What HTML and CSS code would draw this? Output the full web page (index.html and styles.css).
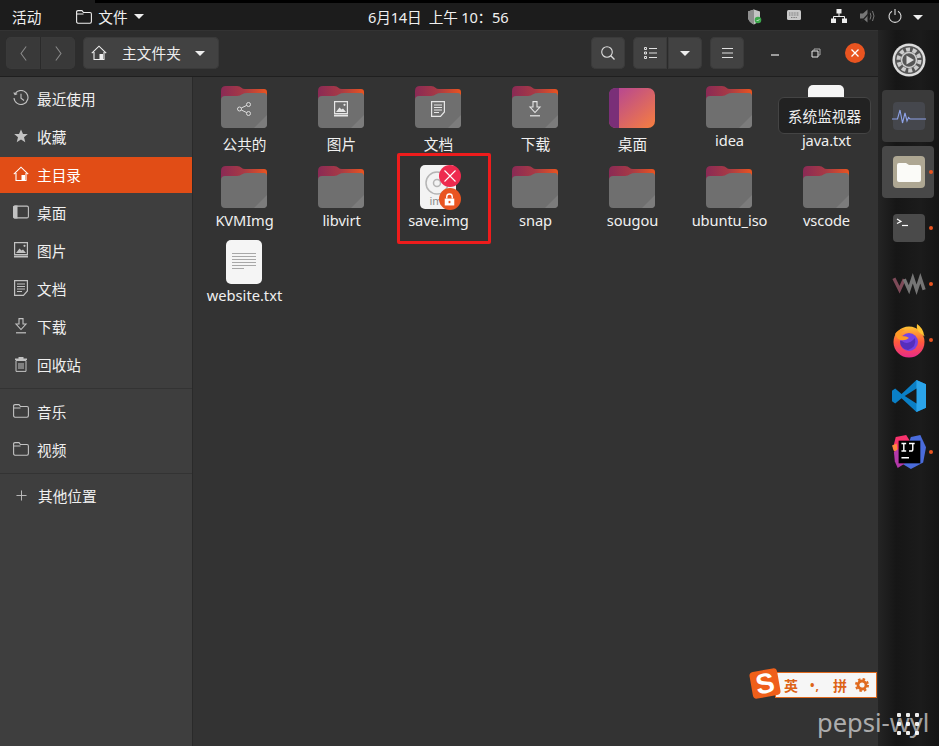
FILE: index.html
```html
<!DOCTYPE html>
<html lang="zh-CN">
<head>
<meta charset="utf-8">
<title>文件</title>
<link rel="stylesheet" href="styles.css">
</head>
<body>
<svg class="defs" width="0" height="0" aria-hidden="true">
  <defs>
    <linearGradient id="fb" x1="0" y1="0" x2="1" y2="0"><stop offset="0" stop-color="#8a2a55"/><stop offset=".5" stop-color="#a83a45"/><stop offset="1" stop-color="#e95420"/></linearGradient>
    <linearGradient id="desk" x1="0" y1="0" x2="1" y2="1"><stop offset="0" stop-color="#b0419a"/><stop offset="1" stop-color="#f77f3f"/></linearGradient>
    <symbol id="folder" viewBox="0 0 46 42">
      <path d="M0 5Q0 0 5 0H16Q19 0 20.500 1.800Q21.500 3 24 3H43Q46 3 46 6V20H0Z" fill="url(#fb)"/>
      <path d="M0 14Q0 10 4 10H16Q19 10 21 8.300Q23 7 26 7H43Q46 7 46 11V38Q46 42 42 42H4Q0 42 0 38Z" fill="#6f6f6f"/>
      <path d="M46 29L33 42H42Q46 42 46 38Z" fill="#7c7c7c"/>
    </symbol>
    <symbol id="i-home" viewBox="0 0 16 16">
      <path d="M.8 8.200L8 1.200l7.200 7M3 7v7.500h10V7" fill="none" stroke="currentColor" stroke-width="1.100"/><rect x="8.500" y="9" width="3.500" height="5.500" fill="currentColor"/>
    </symbol>
    <symbol id="i-folder" viewBox="0 0 16 14">
      <path d="M2 .6H6L7.500 2.500H14Q15.400 2.500 15.400 4V11.500Q15.400 13.200 14 13.200H2Q.6 13.200.6 11.500V2Q.6.6 2 .6ZM.6 4H7.500" fill="none" stroke="currentColor" stroke-width="1.100"/>
    </symbol>
    <symbol id="i-doc" viewBox="0 0 14 16">
      <path d="M.6.6H13.400V11L9.500 15.400H.6Z" fill="none" stroke="currentColor" stroke-width="1.200"/><path d="M3 4H11M3 6.500H11M3 9H11M3 11.500H8" stroke="currentColor"/>
    </symbol>
    <symbol id="i-pic" viewBox="0 0 14 16">
      <path d="M.6.600H13.400V12.500H.6Z" fill="none" stroke="currentColor" stroke-width="1.200"/><path d="M0 13.500H14V15.500H0ZM2 11L5.500 6.500 7.500 8.500 9 7.500 12 11Z" fill="currentColor"/><circle cx="10.500" cy="3.800" r="1.100" fill="currentColor"/>
    </symbol>
    <symbol id="i-down" viewBox="0 0 12 16">
      <path d="M4 .6H8V6H11L6 11.500 1 6H4Z" fill="none" stroke="currentColor" stroke-width="1.100"/><path d="M1 14.800H11" stroke="currentColor" stroke-width="1.200"/>
    </symbol>
  </defs>
</svg>

<div class="screen">
  <div class="strip"><span class="strip-tab"></span></div>
  <header class="topbar">
    <div class="top-left">
      <span class="top-item">活动</span>
      <span class="top-app">
        <svg class="top-folder"><use href="#i-folder"/></svg>
        <span>文件</span>
        <span class="caret"></span>
      </span>
    </div>
    <div class="top-clock">6月14日&nbsp;&nbsp;上午 10：56</div>
    <div class="tray">
      <svg class="tray-shield" viewBox="0 0 14 16"><path d="M6 .5L12 2.500V8Q12 13 6 15.500Q0 13 0 8V2.500Z" fill="#c4c4c4"/><path d="M6 .5V15.500Q0 13 0 8V2.500Z" fill="#8e8e8e"/><circle cx="10" cy="11" r="3.300" fill="#3da84c"/><path d="M8.600 11l1 1 1.800-1.800" fill="none" stroke="#fff" stroke-width=".7"/></svg>
      <svg class="tray-kbd" viewBox="0 0 14 10"><rect width="14" height="10" rx="1.500" fill="#c8c8c8"/><path d="M2 3H12M2 5H12M4 7.500H10" stroke="#777" stroke-dasharray="1 .6"/></svg>
      <svg class="tray-net" viewBox="0 0 16 14"><path d="M5.500 0H10.500V4.500H5.500ZM0 9.500H5V14H0ZM11 9.500H16V14H11Z" fill="#eee"/><path d="M8 4V7.500M2.500 10V7.500H13.500V10" fill="none" stroke="#eee"/></svg>
      <svg class="tray-vol" viewBox="0 0 16 14"><path d="M0 4.500H3L7.500.5V13.500L3 9.500H0Z" fill="#777"/><path d="M10 3.500Q12 7 10 10.500M12.500 2Q15.500 7 12.500 12" fill="none" stroke="#777"/><path d="M1 13L12 1" stroke="#222" stroke-width="1.200"/></svg>
      <svg class="tray-power" viewBox="0 0 14 14"><path d="M4 2.200A6 6 0 1 0 10 2.200M7 0V6" fill="none" stroke="#ddd" stroke-width="1.100"/></svg>
      <span class="caret"></span>
    </div>
  </header>

  <div class="desktop">
    <div class="window">
      <div class="toolbar">
        <div class="btn-group nav-group">
          <button class="tool tool-nav"><svg class="chev" viewBox="0 0 6 14"><path d="M5.500.5L.7 7l4.800 6.500" fill="none" stroke="#8a8a8a"/></svg></button>
          <button class="tool tool-nav"><svg class="chev" viewBox="0 0 6 14"><path d="M.5.500L5.300 7 .5 13.500" fill="none" stroke="#8a8a8a"/></svg></button>
        </div>
        <button class="tool path-btn">
          <svg class="ico-16"><use href="#i-home"/></svg>
          <span class="path-text">主文件夹</span>
          <span class="caret"></span>
        </button>
        <div class="tool-spacer"></div>
        <button class="tool tool-single"><svg class="ico-14" viewBox="0 0 14 14"><circle cx="6" cy="6" r="5.300" fill="none" stroke="#dcdcdc" stroke-width="1.100"/><path d="M9.800 9.800L13.500 13.500" stroke="#dcdcdc" stroke-width="1.300"/></svg></button>
        <div class="btn-group">
          <button class="tool tool-single"><svg class="ico-list" viewBox="0 0 13 12"><path d="M.5.500H2.500V2.500H.5ZM.5 5H2.500V7H.5ZM.5 9.500H2.500V11.500H.5Z" fill="none" stroke="#e0e0e0"/><path d="M5 1.500H13M5 6H13M5 10.500H13" stroke="#e0e0e0"/></svg></button>
          <button class="tool tool-single"><span class="caret"></span></button>
        </div>
        <button class="tool tool-single"><svg class="ico-menu" viewBox="0 0 11 10"><path d="M0 .5H11M0 5H11M0 9.500H11" stroke="#e0e0e0"/></svg></button>
        <div class="win-controls">
          <svg class="win-ico win-min" viewBox="0 0 10 10"><path d="M1 7H9" stroke="#e8e8e8" stroke-width="1.200"/></svg>
          <svg class="win-ico win-max" viewBox="0 0 10 10"><path d="M1 3H7V9H1Z" fill="none" stroke="#e8e8e8"/><path d="M3 3V1H9V7H7" fill="none" stroke="#aaa"/></svg>
          <span class="win-close"><svg class="close-x" viewBox="0 0 8 8"><path d="M.5.500L7.500 7.500M7.500.5L.5 7.500" stroke="#fff" stroke-width="1.300"/></svg></span>
        </div>
      </div>

      <div class="content">
        <nav class="sidebar">
          <div class="side-row"><svg class="side-ico" viewBox="0 0 16 16"><path d="M2.200 3.500A7 7 0 1 1 1 8M.8 2.500L2 4.500 4.200 3.700M8 3.800V8.300L11 10.500" fill="none" stroke="currentColor" stroke-width="1.100"/></svg><span>最近使用</span></div>
          <div class="side-row"><svg class="side-ico" viewBox="0 0 16 16"><path d="M8 1.500L10 6H14.800L11 9.200 12.300 14.200 8 11.500 3.700 14.200 5 9.200 1.200 6H6Z" fill="currentColor"/></svg><span>收藏</span></div>
          <div class="side-row side-active"><svg class="side-ico"><use href="#i-home"/></svg><span>主目录</span></div>
          <div class="side-row"><svg class="side-ico" viewBox="0 0 16 13"><path d="M2 .6H14Q15.400.6 15.400 2V11Q15.400 12.400 14 12.400H2Q.6 12.400.6 11V2Q.6.6 2 .6Z" fill="none" stroke="currentColor" stroke-width="1.100"/><path d="M0 2Q0 0 2 0H4.500V13H2Q0 13 0 11Z" fill="currentColor"/></svg><span>桌面</span></div>
          <div class="side-row"><svg class="side-ico"><use href="#i-pic"/></svg><span>图片</span></div>
          <div class="side-row"><svg class="side-ico"><use href="#i-doc"/></svg><span>文档</span></div>
          <div class="side-row"><svg class="side-ico"><use href="#i-down"/></svg><span>下载</span></div>
          <div class="side-row"><svg class="side-ico" viewBox="0 0 14 16"><path d="M2 4.500H12V15.400H2ZM5 7V13M7 7V13M9 7V13" fill="none" stroke="currentColor"/><path d="M1 2.500H13V4H1ZM4.500 2.500V1H9.500V2.500" fill="currentColor"/></svg><span>回收站</span></div>
          <div class="side-sep"></div>
          <div class="side-row"><svg class="side-ico"><use href="#i-folder"/></svg><span>音乐</span></div>
          <div class="side-row"><svg class="side-ico"><use href="#i-folder"/></svg><span>视频</span></div>
          <div class="side-sep side-sep-last"></div>
          <div class="side-row"><svg class="side-ico side-plus" viewBox="0 0 12 12"><path d="M6 .5V11.500M.5 6H11.500" stroke="currentColor"/></svg><span>其他位置</span></div>
        </nav>

        <main class="files">
          <div class="file-grid">
            <div class="file file-cjk"><span class="folder-wrap"><svg class="folder"><use href="#folder"/></svg><svg class="emblem" viewBox="0 0 14 14"><circle cx="11.500" cy="2.500" r="2" fill="none" stroke="#ddd"/><circle cx="2.500" cy="7" r="2" fill="none" stroke="#ddd"/><circle cx="11.500" cy="11.500" r="2" fill="none" stroke="#ddd"/><path d="M4.300 6L9.700 3.400M4.300 8L9.700 10.600" stroke="#ddd"/></svg></span><span class="label">公共的</span></div>
            <div class="file file-cjk"><span class="folder-wrap"><svg class="folder"><use href="#folder"/></svg><svg class="emblem emblem-light"><use href="#i-pic"/></svg></span><span class="label">图片</span></div>
            <div class="file file-cjk"><span class="folder-wrap"><svg class="folder"><use href="#folder"/></svg><svg class="emblem emblem-light"><use href="#i-doc"/></svg></span><span class="label">文档</span></div>
            <div class="file file-cjk"><span class="folder-wrap"><svg class="folder"><use href="#folder"/></svg><svg class="emblem emblem-light"><use href="#i-down"/></svg></span><span class="label">下载</span></div>
            <div class="file file-cjk"><span class="folder-wrap"><svg class="folder" viewBox="0 0 46 42"><rect x="0" y="2" width="46" height="40" rx="7" fill="url(#desk)"/><path d="M7 2H10V42H7Q0 42 0 35V9Q0 2 7 2Z" fill="#7a2f78"/></svg></span><span class="label">桌面</span></div>
            <div class="file"><span class="folder-wrap"><svg class="folder"><use href="#folder"/></svg></span><span class="label">idea</span></div>
            <div class="file"><span class="folder-wrap"><svg class="folder" viewBox="0 0 46 42"><rect x="5" y="-1" width="36" height="43" rx="5" fill="#f5f5f5"/></svg></span><span class="label">java.txt</span></div>

            <div class="file"><span class="folder-wrap"><svg class="folder"><use href="#folder"/></svg></span><span class="label">KVMImg</span></div>
            <div class="file"><span class="folder-wrap"><svg class="folder"><use href="#folder"/></svg></span><span class="label">libvirt</span></div>
            <div class="file"><span class="folder-wrap"><svg class="folder" viewBox="0 0 46 42"><rect x="5" y="-1" width="36" height="44" rx="5" fill="#f3f3f3"/><circle cx="22" cy="17" r="11" fill="none" stroke="#b5b5b5" stroke-width="1.500"/><circle cx="22" cy="17" r="3.500" fill="none" stroke="#b5b5b5" stroke-width="1.500"/></svg><span class="img-tag">im</span><span class="badge badge-red"><svg class="badge-x" viewBox="0 0 12 12"><path d="M.5.500L11.500 11.500M11.500.5L.5 11.500" stroke="#fff" stroke-width="1.100"/></svg></span><span class="badge badge-lock"><svg class="badge-l" viewBox="0 0 12 14"><path d="M3 6V4A3 3 0 0 1 9 4V6" fill="none" stroke="#fff" stroke-width="1.500"/><path d="M.8 6H11.200V13.500H.8Z" fill="#fff"/><rect x="5" y="8.500" width="2" height="2.500" fill="#e95420"/></svg></span></span><span class="label">save.img</span></div>
            <div class="file"><span class="folder-wrap"><svg class="folder"><use href="#folder"/></svg></span><span class="label">snap</span></div>
            <div class="file"><span class="folder-wrap"><svg class="folder"><use href="#folder"/></svg></span><span class="label">sougou</span></div>
            <div class="file"><span class="folder-wrap"><svg class="folder"><use href="#folder"/></svg></span><span class="label">ubuntu_iso</span></div>
            <div class="file"><span class="folder-wrap"><svg class="folder"><use href="#folder"/></svg></span><span class="label">vscode</span></div>

            <div class="file file-doc"><span class="doc"><svg class="doc-ico" viewBox="0 0 36 44"><rect width="36" height="44" rx="5" fill="#f5f5f5"/><path d="M6 13.500H30M6 16.500H30M6 19.500H30M6 22.500H30M6 25.500H30M6 28.500H18" stroke="#a8a8a8"/></svg></span><span class="label">website.txt</span></div>
          </div>
        </main>
      </div>
    </div>

    <aside class="dock">
      <div class="slot"><svg class="dock-ico-lg" viewBox="0 0 34 34"><circle cx="17" cy="17" r="16.500" fill="#dcdcdc"/><circle cx="17" cy="17" r="14" fill="#565656"/><circle cx="17" cy="17" r="10.500" fill="none" stroke="#cdcdcd" stroke-width="4" stroke-dasharray="4 2.600"/><circle cx="17" cy="17" r="7.500" fill="#565656" stroke="#cdcdcd" stroke-width="1.600"/><path d="M14.500 12.500L22 17 14.500 21.500Z" fill="#dcdcdc"/></svg></div>
      <div class="slot slot-open"><span class="tile tile-dim"></span><svg class="dock-ico" viewBox="0 0 34 28"><rect x="1" width="32" height="28" rx="4" fill="#45474d"/><path d="M0 17H5.500L8 8 10.500 21 13 11 15 19 16.500 15.500 18 17H34" fill="none" stroke="#8ea2e8" stroke-width="1.100"/></svg></div>
      <div class="slot slot-open"><span class="tile"></span><svg class="dock-ico" viewBox="0 0 34 34"><rect x="1" y="1" width="32" height="32" rx="4" fill="#aea793"/><path d="M5 10Q5 8 7 8H14L17 10H27Q29 10 29 12V25Q29 27 27 27H7Q5 27 5 25Z" fill="#fbfbf8"/></svg><span class="dot"></span></div>
      <div class="slot"><svg class="dock-ico" viewBox="0 0 34 28"><rect x="1" width="32" height="28" rx="4" fill="#4a4a4a"/><path d="M5 5L9 7.500 5 9.500" fill="none" stroke="#fff" stroke-width="1.200"/><path d="M10 11.500H16" stroke="#fff" stroke-width="1.200"/></svg><span class="dot"></span></div>
      <div class="slot"><svg class="dock-ico" viewBox="0 0 36 14"><path d="M2 1L8 13 13 2" fill="none" stroke="#7d4a58" stroke-width="3.500"/><path d="M13 2L18 13 22 1 26 13 30 1 34 13" fill="none" stroke="#757575" stroke-width="3.500"/></svg><span class="dot"></span></div>
      <div class="slot"><svg class="dock-ico" viewBox="0 0 34 34"><defs><linearGradient id="ff" x1="0" y1="0" x2="0" y2="1"><stop offset="0" stop-color="#ffc433"/><stop offset=".5" stop-color="#ff5a3c"/><stop offset="1" stop-color="#e82a8a"/></linearGradient></defs><circle cx="17" cy="19" r="15.500" fill="url(#ff)"/><path d="M25 1Q24 7 28 10 34 15 32 12 31 5 25 1Z" fill="#ffc433"/><circle cx="17" cy="19" r="9" fill="#7542e5"/><path d="M10 18Q16 23 23 15 25 24 16 27 8 26 8 18Z" fill="#3a1f9a" opacity=".55"/><path d="M3 11Q7 5 13 7 8 9 9 13 15 13 17 15 12 19 6 16Z" fill="#ff9a26"/></svg><span class="dot"></span></div>
      <div class="slot"><svg class="dock-ico" viewBox="0 0 32 32"><path d="M23 1L32 5V27L23 31 9 18 3 23 0 21V11L3 9 9 14Z" fill="#0a7fc6"/><path d="M23 1L32 5V27L23 31Z" fill="#2ba4ea"/><path d="M23 9L12 16 23 23Z" fill="#1a1a1a"/></svg></div>
      <div class="slot"><svg class="dock-ico" viewBox="0 0 36 36"><path d="M4 2L15 0 20 8 6 24 1 14Z" fill="#f7326c"/><path d="M0 11L5 9 6 18 2 17Z" fill="#ff8a3c"/><path d="M20 2L30 0 36 13 33 29 20 36 10 30Z" fill="#4a6cdc"/><path d="M2 18L8 14 14 30 6 35 3 28Z" fill="#b338a8"/><rect x="7" y="6" width="23" height="24" fill="#000"/><path d="M10 9H15M12.500 9V17M10 17H15M18 9H24M22 9V15Q22 17 20 17H18M10 24H18" fill="none" stroke="#fff" stroke-width="1.500"/></svg><span class="dot"></span></div>
      <div class="apps-grid">
        <i></i><i></i><i></i><i></i><i></i><i></i><i></i><i></i><i></i>
      </div>
    </aside>
  </div>

  <div class="tooltip">系统监视器</div>
  <div class="annotation"></div>
  <div class="ime">
    <span class="ime-logo">S</span>
    <span class="ime-text">英</span>
    <span class="ime-punct">•,</span>
    <span class="ime-text">拼</span>
    <svg class="ime-gear" viewBox="0 0 14 14"><circle cx="7" cy="7" r="4" fill="none" stroke="#e06a1f" stroke-width="2.800"/><circle cx="7" cy="7" r="6" fill="none" stroke="#e06a1f" stroke-width="2" stroke-dasharray="2.500 2.200"/></svg>
  </div>
  <div class="watermark">pepsi-wyl</div>
</div>
</body>
</html>
```

FILE: styles.css
```css
* { box-sizing: border-box; }
html, body { margin: 0; padding: 0; }
body {
  width: 939px;
  height: 746px;
  overflow: hidden;
  font-family: "Noto Sans", "Noto Sans CJK SC", sans-serif;
  font-size: 14.67px;
  color: #eee;
  background: #000;
}
.defs { position: absolute; }
button { font: inherit; color: inherit; padding: 0; border: 0; background: none; }

.screen { position: relative; width: 939px; height: 746px; display: flex; flex-direction: column; overflow: hidden; }
.strip { height: 3px; background: #000; flex: none; }
.strip-tab { display: block; width: 95px; height: 3px; background: #1c1c1c; }

.topbar {
  flex: none;
  height: 27px;
  display: grid;
  grid-template-columns: 356px 141px 1fr;
  align-items: center;
  background: #1c1c1c;
  font-size: 14.67px;
  color: #f0f0f0;
  padding: 0 0 0 12px;
}
.top-left { display: flex; align-items: center; gap: 35px; }
.top-app { display: flex; align-items: center; }
.top-folder { width: 16px; height: 14px; margin-right: 6px; color: #eee; }
.top-clock { white-space: nowrap; letter-spacing: -.2px; }
.caret { display: inline-block; width: 0; height: 0; border-left: 5px solid transparent; border-right: 5px solid transparent; border-top: 5px solid #eee; margin-left: 6px; }
.tray { position: relative; height: 27px; }
.tray svg, .tray .caret { position: absolute; }
.tray-shield { left: 239px; top: 6px; width: 14px; height: 16px; }
.tray-kbd { left: 278px; top: 7px; width: 14px; height: 10px; }
.tray-net { left: 322px; top: 6px; width: 16px; height: 14px; }
.tray-vol { left: 351px; top: 6px; width: 16px; height: 14px; }
.tray-power { left: 379px; top: 6px; width: 14px; height: 14px; }
.tray .caret { left: 404px; top: 12px; margin: 0; }

.desktop { flex: 1; display: flex; min-height: 0; }
.window { flex: 1; min-width: 0; display: flex; flex-direction: column; }
.toolbar {
  flex: none;
  height: 47px;
  display: flex;
  align-items: center;
  padding: 0 0 1px 6px;
  background: #2d2d2d;
  border-top: 1px solid #333;
  border-bottom: 1px solid #1f1f1f;
}
.btn-group { display: flex; gap: 1px; border-radius: 5px; background: #2a2a2a; }
.tool {
  height: 32px;
  display: flex;
  align-items: center;
  justify-content: center;
  background: #424242;
  border-radius: 5px;
  box-shadow: inset 0 0 0 1px #3a3a3a;
}
.btn-group .tool:first-child { border-radius: 5px 0 0 5px; }
.btn-group .tool:last-child { border-radius: 0 5px 5px 0; }
.nav-group .tool { background: #393939; }
.tool-nav { width: 34px; }
.chev { width: 7px; height: 15px; }
.path-btn { width: 136px; margin-left: 8px; justify-content: flex-start; padding-left: 8px; }
.ico-16 { width: 16px; height: 16px; color: #eee; }
.path-text { margin-left: 15px; padding-bottom: 2px; letter-spacing: .1px; }
.path-btn .caret { margin-left: 14px; }
.tool-spacer { flex: 1; }
.tool-single { width: 34px; }
.tool-single .caret { margin: 0; }
.btn-group + .tool, .tool + .btn-group { margin-left: 8px; }
.ico-14 { width: 14px; height: 14px; }
.ico-list { width: 13px; height: 12px; }
.ico-menu { width: 11px; height: 10px; }
.win-controls { display: flex; align-items: center; width: 134px; padding-left: 26px; }
.win-ico { width: 10px; height: 10px; }
.win-min { margin-right: 31px; }
.win-max { margin-right: 24px; }
.win-close { width: 20px; height: 20px; border-radius: 50%; background: #e95420; display: flex; align-items: center; justify-content: center; }
.close-x { width: 8px; height: 8px; }

.content { flex: 1; display: flex; min-height: 0; }
.sidebar { width: 193px; flex: none; padding-top: 4px; background: #3e3e3e; border-right: 1px solid #2a2a2a; color: #f0f0f0; }
.side-row { height: 36px; margin-bottom: 2px; padding: 0 0 2px 13px; display: flex; align-items: center; }
.side-ico { width: 16px; height: 16px; margin-right: 8px; color: #c2c2c2; flex: none; }
.side-plus { width: 11px; height: 11px; margin: 0 11px 0 3px; }
.side-active { background: #e14d16; color: #fff; }
.side-active .side-ico { color: #fff; }
.side-sep { height: 1px; margin: 5px 0 5px; background: #333; }
.side-sep-last { margin-bottom: 4px; }

.files { flex: 1; background: #333; min-width: 0; padding: 9px 0 0 2px; }
.file-grid { display: grid; grid-template-columns: repeat(7, 97px); grid-template-rows: 80px 74px auto; }
.file { display: flex; flex-direction: column; align-items: center; font-size: 14.67px; color: #f0f0f0; }
.folder-wrap { position: relative; width: 46px; height: 42px; display: block; flex: none; }
.folder { width: 46px; height: 42px; display: block; overflow: visible; }
.emblem { position: absolute; left: 16px; top: 15px; width: 14px; height: 16px; }
.emblem-light { color: #e6e6e6; }
.label { margin-top: 1px; padding-left: 2px; line-height: 22px; white-space: nowrap; letter-spacing: -.1px; }
.file-cjk .label { margin-top: 5px; letter-spacing: 0; }
.doc { display: block; width: 36px; height: 44px; }
.doc-ico { width: 36px; height: 44px; display: block; }
.file-doc .label { margin-top: 0; letter-spacing: 0; }

.img-tag { position: absolute; left: 15px; top: 28px; font-size: 11px; line-height: 13px; color: #8b8b8b; }
.badge { position: absolute; width: 22px; height: 22px; border-radius: 50%; left: 24px; display: flex; align-items: center; justify-content: center; }
.badge-red { top: -1px; background: #ee2a4e; }
.badge-lock { top: 22px; background: #e95420; }
.badge-x { width: 12px; height: 12px; }
.badge-l { width: 11px; height: 13px; }

.dock {
  width: 61px;
  flex: none;
  padding-top: 2px;
  display: flex;
  flex-direction: column;
  background: linear-gradient(90deg, #242424 0, #161616 30%, #1b1b1b 70%, #141414 100%);
}
.slot { position: relative; height: 56px; flex: none; display: flex; align-items: center; justify-content: center; }
.tile { position: absolute; left: 4px; top: 2px; width: 52px; height: 52px; border-radius: 4px; background: #484848; }
.tile-dim { background: #3a3a3a; }
.dock-ico { position: relative; width: 34px; height: 34px; overflow: visible; }
.dock-ico-lg { width: 34px; height: 34px; }
.dot { position: absolute; left: 51px; top: 26px; width: 4px; height: 4px; border-radius: 50%; background: #e95420; }
.apps-grid { margin: auto 0 11px 19px; display: grid; grid-template-columns: repeat(3, 4px); gap: 5px; }
.apps-grid i { width: 4px; height: 4px; background: #eee; border-radius: 1px; }

.tooltip {
  position: absolute;
  left: 778px;
  top: 97px;
  width: 93px;
  height: 37px;
  background: #222;
  border: 1px solid #444;
  border-radius: 6px;
  display: flex;
  align-items: center;
  justify-content: center;
  font-size: 14.67px;
  color: #eee;
}
.annotation { position: absolute; left: 397px; top: 153px; width: 94px; height: 91px; border: 3px solid #ee1c1c; border-radius: 2px; }

.ime {
  position: absolute;
  left: 775px;
  top: 672px;
  width: 102px;
  height: 26px;
  display: flex;
  align-items: center;
  background: #f6f6f6;
  border: 1px solid #e06a1f;
  color: #dd6316;
  font-size: 14px;
  font-weight: 700;
  padding-left: 8px;
}
.ime-logo {
  position: absolute;
  left: -25px;
  top: -3px;
  width: 28px;
  height: 27px;
  border-radius: 4px;
  background: #ef5f1a;
  color: #fff;
  font-family: "Liberation Sans", sans-serif;
  font-size: 28px;
  font-weight: 700;
  line-height: 27px;
  text-align: center;
  transform: rotate(-10deg);
}
.ime-punct { width: 23px; margin-left: 12px; font-size: 12px; letter-spacing: 1px; }
.ime-gear { width: 14px; height: 14px; margin-left: 8px; }
.watermark { position: absolute; left: 817px; top: 704px; font-size: 25.5px; line-height: 36px; color: rgba(255,255,255,.62); white-space: nowrap; }
```
